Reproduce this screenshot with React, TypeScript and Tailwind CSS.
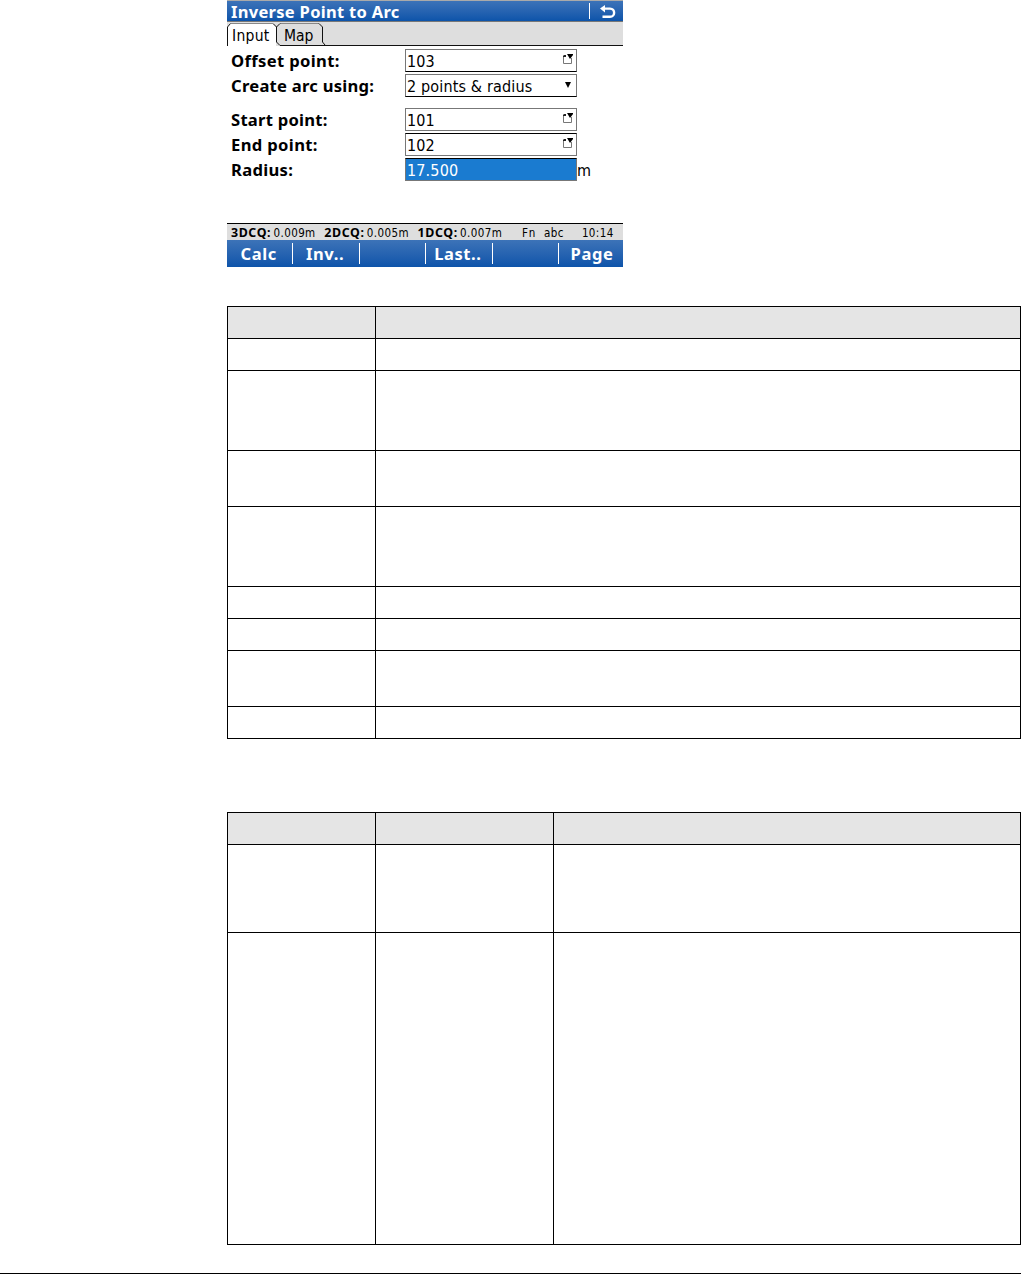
import clsx from "clsx";

type FieldProps = {
  label: string;
  labelClass: string;
  value: string;
  icon?: "list" | "arrow";
  selected?: boolean;
  unit?: string;
  borderClass: string;
};

const bold = "font-['Noto_Sans',sans-serif] font-bold";
const regular = "font-['DejaVu_Sans_Condensed','DejaVu_Sans',sans-serif] [font-stretch:condensed]";

const topFields: FieldProps[] = [
  {
    label: "Offset point:",
    labelClass: "tracking-[0.35px]",
    value: "103",
    icon: "list",
    borderClass: "border-t-[#777] border-b-black",
  },
  {
    label: "Create arc using:",
    labelClass: "tracking-[0.25px]",
    value: "2 points & radius",
    icon: "arrow",
    borderClass: "border-t-[#777] border-b-black",
  },
];

const bottomFields: FieldProps[] = [
  {
    label: "Start point:",
    labelClass: "tracking-[0.25px]",
    value: "101",
    icon: "list",
    borderClass: "border-t-[#777] border-b-[#777]",
  },
  {
    label: "End point:",
    labelClass: "tracking-[0.35px]",
    value: "102",
    icon: "list",
    borderClass: "border-t-black border-b-[#777]",
  },
  {
    label: "Radius:",
    labelClass: "tracking-[0.3px]",
    value: "17.500",
    selected: true,
    unit: "m",
    borderClass: "border-t-black border-b-[#777]",
  },
];

const softKeys = ["Calc", "Inv..", "", "Last..", "", "Page"];

const firstTable = {
  columns: "grid-cols-[148px_645px]",
  count: 2,
  rows: ["h-8", "h-8", "h-20", "h-14", "h-20", "h-8", "h-8", "h-14", "h-8"],
};

const secondTable = {
  columns: "grid-cols-[148px_178px_467px]",
  count: 3,
  rows: ["h-8", "h-[88px]", "h-[312px]"],
};

function ListIcon() {
  return (
    <svg width="11" height="10" viewBox="0 0 11 10" className="mb-[3px] shrink-0">
      <path d="M1.5 2V9.5H9.5V4" fill="none" stroke="#777" />
      <path d="M1 3V2l1-1h2v2z" fill="#222" />
      <path d="M5 0h6v1L8 5z" fill="#000" />
    </svg>
  );
}

function ArrowIcon() {
  return (
    <svg width="6" height="6" viewBox="0 0 6 6" className="mr-0.5 mb-0.5 shrink-0">
      <path d="M0 0h6L3 6z" fill="#000" />
    </svg>
  );
}

function BackIcon() {
  return (
    <svg width="16" height="14" viewBox="0 0 16 14" className="mt-px">
      <path d="M4 3.6H10C15.5 3.6 15.5 11.8 10 11.8H2.5" fill="none" stroke="#fff" strokeWidth="2.4" />
      <path d="M0 3.6L5 0V7.4z" fill="#fff" />
    </svg>
  );
}

function Field({ label, labelClass, value, icon, selected, unit, borderClass }: FieldProps) {
  return (
    <div className="flex h-[23px] items-center">
      <span className={clsx(bold, "w-[174px] text-[16.6px] leading-[22px]", labelClass)}>
        {label}
      </span>
      <div
        className={clsx(
          regular,
          "flex h-[23px] w-[172px] items-center justify-between border border-x-[#777] pr-[3px] pl-px text-[16px] tracking-[0.15px]",
          borderClass,
          selected && "bg-[#1a7bd0] text-white",
        )}
      >
        <span className="pt-0.5 leading-[20px]">{value}</span>
        {icon === "list" && <ListIcon />}
        {icon === "arrow" && <ArrowIcon />}
      </div>
      {unit && <span className={clsx(regular, "pt-0.5 text-[16px] leading-[21px]")}>{unit}</span>}
    </div>
  );
}

function Tabs() {
  return (
    <div className="relative h-6 bg-[#dedede]">
      <svg width="396" height="24" viewBox="0 0 396 24" className="absolute inset-0">
        <path d="M0 24V5L3 2H46L49 5V24z" fill="#fff" />
        <path d="M0.5 24V5L3.5 1.5M46 1.5L49.5 5V20L53 23.5H396" fill="none" stroke="#111" />
        <path d="M4 1.5H46M53 1.5H92" fill="none" stroke="#888" />
        <path d="M49.5 5L53 1.5M92 1.5L95.5 5V20L98 23" fill="none" stroke="#111" />
      </svg>
      <div className={clsx(regular, "relative flex pt-1 text-[15.5px] leading-5")}>
        <span className="w-[57px] pl-[5px] tracking-[0.3px]">Input</span>
        <span>Map</span>
      </div>
    </div>
  );
}

function StatusItem({ name, value }: { name: string; value: string }) {
  return (
    <span className="flex w-[93.3px] items-center whitespace-nowrap">
      <span className={clsx(bold, "w-[42.5px] text-[12.4px] leading-[15px] tracking-[0.6px]")}>
        {name}:
      </span>
      <span className="tracking-[0.4px]">{value}</span>
    </span>
  );
}

function Screen() {
  return (
    <section className="flex h-[267px] w-[396px] flex-col text-black">
      <header className="flex h-[22px] items-center border-t border-t-[#aaa] border-b border-b-[#777] bg-linear-to-b from-[#3c73b8] to-[#0c54aa] pl-1 text-white">
        <h1 className={clsx(bold, "flex-1 pt-0.5 text-[16.5px] leading-5 tracking-[0.3px]")}>
          Inverse Point to Arc
        </h1>
        <span className="mr-[10px] h-4 w-px bg-white" />
        <span className="mr-[7px]">
          <BackIcon />
        </span>
      </header>
      <Tabs />
      <div className="flex flex-col gap-0.5 pt-[3px] pl-1">
        {topFields.map((field) => (
          <Field key={field.label} {...field} />
        ))}
      </div>
      <div className="flex flex-col gap-0.5 pt-[11px] pl-1">
        {bottomFields.map((field) => (
          <Field key={field.label} {...field} />
        ))}
      </div>
      <div
        className={clsx(
          regular,
          "mt-auto flex h-[17px] items-center border-t border-black bg-[#dedede] pt-px pl-1 text-[11.5px] leading-4",
        )}
      >
        <StatusItem name="3DCQ" value="0.009m" />
        <StatusItem name="2DCQ" value="0.005m" />
        <StatusItem name="1DCQ" value="0.007m" />
        <span className="ml-[11px] w-[22px] tracking-[0.8px]">Fn</span>
        <span className="w-[38px] tracking-[0.5px]">abc</span>
        <span className="tracking-[0.4px]">10:14</span>
      </div>
      <footer className="flex h-[27px] items-center bg-linear-to-b from-[#3c73b8] to-[#0c54aa] text-white">
        {softKeys.map((key, index) => (
          <span
            key={index}
            className={clsx(
              bold,
              "h-[21px] shrink-0 text-center text-[16.5px] leading-[21px] tracking-[0.6px]",
              index < softKeys.length - 1 ? "w-[66.4px] border-r border-white pr-0.5" : "w-[66px]",
            )}
          >
            {key}
          </span>
        ))}
      </footer>
    </section>
  );
}

function EmptyTable({ columns, count, rows }: typeof firstTable) {
  return (
    <div className="w-[794px] border-t border-l border-black">
      {rows.map((height, row) => (
        <div key={row} className={clsx("grid", columns, height, row === 0 && "bg-[#e5e5e5]")}>
          {Array.from({ length: count }, (_, col) => (
            <div key={col} className="border-r border-b border-black" />
          ))}
        </div>
      ))}
    </div>
  );
}

export default function App() {
  return (
    <main className="flex h-[1274px] w-[1021px] flex-col overflow-hidden border-b border-black bg-white pl-[227px]">
      <Screen />
      <div className="mt-[39px]">
        <EmptyTable {...firstTable} />
      </div>
      <div className="mt-[73px]">
        <EmptyTable {...secondTable} />
      </div>
    </main>
  );
}
